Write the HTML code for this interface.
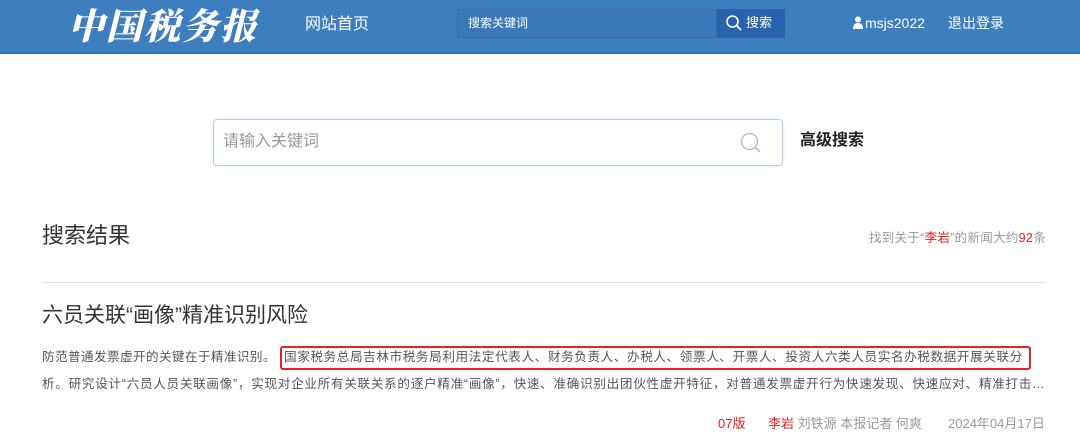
<!DOCTYPE html>
<html><head><meta charset="utf-8"><style>
*{margin:0;padding:0;box-sizing:border-box}
body{width:1080px;height:448px;background:#fff;position:relative;overflow:hidden;font-family:"Liberation Sans","Noto Sans CJK SC",sans-serif;color:#333}
.a{position:absolute;white-space:nowrap}
#hd{position:absolute;left:0;top:0;width:1080px;height:54px;background:#3d7ebf;border-bottom:2px solid #2f6aa8}
</style></head><body>
<div id="hd">
<div class="a" style="left:68px;top:2px;font-family:'Noto Serif CJK SC',serif;font-size:36px;font-weight:900;color:#fff;letter-spacing:2px;font-style:italic;line-height:46px">中国税务报</div>
<div class="a" style="left:305px;top:14px;font-size:16px;color:#fff;line-height:22px">网站首页</div>
<div class="a" style="left:457px;top:9px;width:260px;height:29px;background:#3a78b9;border:1px solid #3470b0;border-radius:2px 0 0 2px"></div>
<div class="a" style="left:468px;top:15px;font-size:12px;color:#fff;line-height:17px">搜索关键词</div>
<div class="a" style="left:717px;top:9px;width:68px;height:29px;background:#2a63ad"></div>
<svg class="a" style="left:725px;top:14px" width="18" height="18" viewBox="0 0 18 18"><circle cx="7.5" cy="7.5" r="5.5" fill="none" stroke="#fff" stroke-width="1.6"/><path d="M11.5 11.5L16 16" stroke="#fff" stroke-width="1.8"/></svg>
<div class="a" style="left:746px;top:14px;font-size:13px;color:#fff;line-height:18px">搜索</div>
<svg class="a" style="left:853px;top:16px" width="10" height="13" viewBox="0 0 10 13"><circle cx="5" cy="3.5" r="3" fill="#fff"/><path d="M0 13Q0 7 5 7Q10 7 10 13Z" fill="#fff"/></svg>
<div class="a" style="left:865px;top:13px;font-size:14px;color:#fff;line-height:20px">msjs2022</div>
<div class="a" style="left:948px;top:13px;font-size:14px;color:#fff;line-height:20px">退出登录</div>
</div>
<div class="a" style="left:213px;top:119px;width:570px;height:47px;border:1px solid #b6cfe8;border-radius:4px;box-shadow:0 0 3px #dbe8f5"></div>
<div class="a" style="left:223px;top:132px;font-size:16px;color:#999;line-height:20px">请输入关键词</div>
<svg class="a" style="left:739px;top:131px" width="24" height="24" viewBox="0 0 24 24"><circle cx="10.5" cy="10.5" r="8" fill="none" stroke="#b5b5b5" stroke-width="1.3"/><path d="M16.5 16.5L21 21" stroke="#b5b5b5" stroke-width="1.4"/></svg>
<div class="a" style="left:800px;top:131px;font-size:16px;font-weight:bold;color:#222;line-height:20px">高级搜索</div>
<div class="a" style="left:42px;top:222px;font-size:22px;color:#333;line-height:28px">搜索结果</div>
<div class="a" style="right:34px;top:230px;font-size:12.5px;color:#999;line-height:17px;letter-spacing:0.3px">找到关于“<span style="color:#e02020">李岩</span>”的新闻大约<span style="color:#e02020">92</span>条</div>
<div class="a" style="left:42px;top:282px;width:1004px;height:1px;background:#e2e2e2"></div>
<div class="a" style="left:42px;top:302px;font-size:21px;color:#333;line-height:28px">六员关联“画像”精准识别风险</div>
<div class="a" style="left:42px;top:348px;font-size:12.6px;color:#555;line-height:18px;letter-spacing:0.4px">防范普通发票虚开的关键在于精准识别。</div>
<div class="a" style="left:280px;top:346px;width:751px;height:24px;border:2px solid #e0242a;border-radius:3px"></div>
<div class="a" style="left:284px;top:348px;font-size:12.6px;color:#555;line-height:18px;letter-spacing:0.6px">国家税务总局吉林市税务局利用法定代表人、财务负责人、办税人、领票人、开票人、投资人六类人员实名办税数据开展关联分</div>
<div class="a" style="left:42px;top:375px;font-size:12.6px;color:#555;line-height:18px;letter-spacing:0.7px">析。研究设计“六员人员关联画像”，实现对企业所有关联关系的逐户精准“画像”，快速、准确识别出团伙性虚开特征，对普通发票虚开行为快速发现、快速应对、精准打击…</div>
<div class="a" style="left:718px;top:415px;font-size:13px;color:#e02020;line-height:18px">07版</div>
<div class="a" style="left:768px;top:415px;font-size:13px;color:#999;line-height:18px"><span style="color:#e02020">李岩</span> 刘铁源 本报记者 何爽</div>
<div class="a" style="left:948px;top:415px;font-size:13px;color:#999;line-height:18px">2024年04月17日</div>
</body></html>
